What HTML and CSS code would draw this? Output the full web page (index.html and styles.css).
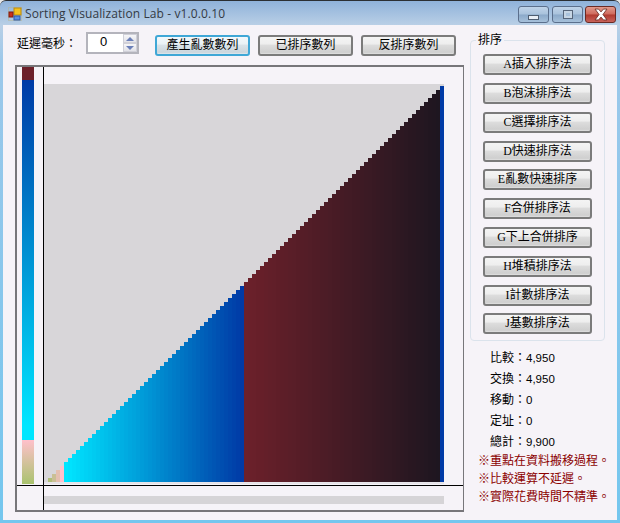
FILE: index.html
```html
<!DOCTYPE html>
<html lang="zh-Hant">
<head>
<meta charset="utf-8">
<title>Sorting Visualization Lab</title>
<link rel="stylesheet" href="styles.css">
</head>
<body>
<div class="window">
  <header class="titlebar">
    <svg class="app-icon" width="14" height="14" viewBox="0 0 14 14">
      <rect x="0.5" y="0.5" width="13" height="13" fill="none" stroke="#b9b48c" stroke-dasharray="1 1"/>
      <rect x="6" y="1" width="7" height="7" fill="#f4c21c" stroke="#b98a10"/>
      <rect x="1" y="5" width="4" height="5" fill="#c8301c" stroke="#7c1c10"/>
      <rect x="6" y="9" width="6" height="4" fill="#5a8fe0" stroke="#2c5aa8"/>
    </svg>
    <span class="title">Sorting Visualization Lab - v1.0.0.10</span>
    <div class="caption-buttons">
      <div class="cap cap-min"><span class="min-glyph"></span></div>
      <div class="cap cap-max"><span class="max-glyph"></span></div>
      <div class="cap cap-close">
        <svg width="18" height="13" viewBox="0 0 16 12">
          <path d="M2.500 1h3.200L8 3.600 10.300 1h3.200L9.800 6l3.700 5h-3.200L8 8.400 5.700 11H2.500l3.700-5z" fill="#fff" stroke="#5a2018" stroke-width="0.7"/>
        </svg>
      </div>
    </div>
  </header>
  <main class="client">
    <section class="left">
      <div class="toolbar">
        <label class="delay-label">延遲毫秒：</label>
        <div class="spin">
          <span class="spin-value">0</span>
          <div class="spin-btns">
            <div class="spin-btn"><span class="arrow-up"></span></div>
            <div class="spin-btn"><span class="arrow-down"></span></div>
          </div>
        </div>
        <div class="top-btns">
          <button class="btn btn-top btn-focus">產生亂數數列</button>
          <button class="btn btn-top">已排序數列</button>
          <button class="btn btn-top">反排序數列</button>
        </div>
      </div>
      <div class="canvas">
        <div class="strip-cell"><div class="strip"></div></div>
        <div class="chart-cell"><div class="chart" id="chart"></div></div>
        <div class="corner-cell"></div>
        <div class="track-cell"><div class="track"></div></div>
      </div>
    </section>
    <aside class="right">
      <fieldset class="group">
        <legend class="group-title">排序</legend>
        <div class="sort-btns">
          <button class="btn btn-sort">A插入排序法</button>
          <button class="btn btn-sort">B泡沫排序法</button>
          <button class="btn btn-sort">C選擇排序法</button>
          <button class="btn btn-sort">D快速排序法</button>
          <button class="btn btn-sort btn-tight">E亂數快速排序</button>
          <button class="btn btn-sort">F合併排序法</button>
          <button class="btn btn-sort">G下上合併排序</button>
          <button class="btn btn-sort">H堆積排序法</button>
          <button class="btn btn-sort">I計數排序法</button>
          <button class="btn btn-sort btn-tight">J基數排序法</button>
        </div>
      </fieldset>
      <ul class="stats">
        <li>比較：<span class="num">4,950</span></li>
        <li>交換：<span class="num">4,950</span></li>
        <li>移動：<span class="num">0</span></li>
        <li>定址：<span class="num">0</span></li>
        <li>總計：<span class="num">9,900</span></li>
      </ul>
      <ul class="notes">
        <li>※重點在資料搬移過程。</li>
        <li>※比較運算不延遲。</li>
        <li>※實際花費時間不精準。</li>
      </ul>
    </aside>
  </main>
</div>
<script src="script.js"></script>
</body>
</html>
```
FILE: styles.css
```css
* { box-sizing: border-box; }
html, body { margin: 0; padding: 0; }
body {
  width: 620px;
  height: 523px;
  overflow: hidden;
  background: #e8e8e8;
  font-family: "Noto Sans CJK TC", sans-serif;
  font-size: 12px;
  color: #000;
}
.window {
  width: 620px;
  height: 523px;
  display: flex;
  flex-direction: column;
  padding: 0 3px 3px 3px;
  border-top: 1px solid #2b2f33;
  border-radius: 6px 6px 0 0;
  background: linear-gradient(180deg, #8fb2da 0, #b9cfe6 24px, #9cc8ea 60px, #74c6ee 100%);
}
.titlebar {
  height: 24px;
  flex: none;
  display: flex;
  align-items: center;
  padding-left: 5px;
}
.app-icon { flex: none; margin-top: 1px; }
.title {
  margin-left: 3px;
  font-family: "Open Sans", sans-serif;
  font-size: 12px;
  letter-spacing: 0.1px;
  color: #333a44;
  white-space: nowrap;
}
.caption-buttons {
  margin-left: auto;
  margin-right: 1px;
  margin-top: 3px;
  display: flex;
  gap: 3px;
}
.cap {
  width: 31px;
  height: 17px;
  border: 1px solid #5b6f8c;
  border-radius: 3px;
  display: flex;
  align-items: center;
  justify-content: center;
  background: linear-gradient(180deg, #bfd3e8 0, #a9c2dc 48%, #8ba9c9 52%, #a6c0da 100%);
}
.cap-close {
  border-color: #6a2a24;
  background: linear-gradient(180deg, #e09a8c 0, #cf6a5c 48%, #b03a2e 52%, #c8625a 100%);
}
.cap-max { margin-right: -1px; }
.min-glyph {
  width: 11px;
  height: 5px;
  margin-top: 5px;
  background: #e8eef5;
  border: 1px solid #4e5d70;
}
.max-glyph {
  width: 10px;
  height: 9px;
  background: #a9c2dc;
  border: 1px solid #56657a;
  box-shadow: inset 0 0 0 2px #c6d5e4;
}
.client {
  flex: 1;
  min-height: 0;
  display: flex;
  background: #f6f3f8;
  padding-left: 12px;
}
.left {
  width: 449px;
  flex: none;
  display: flex;
  flex-direction: column;
}
.toolbar {
  height: 40px;
  flex: none;
  padding-top: 7px;
  display: flex;
  align-items: flex-start;
}
.delay-label {
  width: 71px;
  padding-left: 2px;
  line-height: 22px;
}
.spin {
  width: 53px;
  height: 22px;
  border: 2px solid #b4b4bc;
  background: #fff;
  display: flex;
  justify-content: space-between;
}
.spin-value {
  width: 31px;
  text-align: center;
  font-family: "Liberation Sans", sans-serif;
  font-size: 13px;
  line-height: 15px;
}
.spin-btns {
  width: 14px;
  display: flex;
  flex-direction: column;
}
.spin-btn {
  flex: 1;
  display: flex;
  align-items: center;
  justify-content: center;
  background: linear-gradient(180deg, #f6f6f8, #e2e2e8);
  border: 1px solid #d0d0d8;
}
.arrow-up {
  width: 0; height: 0;
  border-left: 4px solid transparent;
  border-right: 4px solid transparent;
  border-bottom: 4px solid #6a7fb8;
}
.arrow-down {
  width: 0; height: 0;
  border-left: 4px solid transparent;
  border-right: 4px solid transparent;
  border-top: 4px solid #6a7fb8;
}
.top-btns {
  margin-left: 16px;
  margin-top: 3px;
  display: flex;
  gap: 8px;
}
.btn {
  margin: 0;
  padding: 0;
  height: 21px;
  border: 2px solid #7b7b7b;
  border-radius: 3px;
  background: linear-gradient(180deg, #f4f4f4 0, #eeeeee 40%, #dcdcdc 50%, #cfcfcf 90%, #e0e0e0 100%);
  font-family: "Liberation Serif", "Noto Sans CJK TC", serif;
  font-size: 12px;
  line-height: 17px;
  color: #000;
  white-space: nowrap;
}
.btn-top { width: 95px; }
.btn-focus {
  border-color: #3fa7d6;
  background: linear-gradient(180deg, #f2f8fb 0, #eaf2f6 40%, #d8e2e8 50%, #ccd6dc 90%, #dfe8ee 100%);
}
.btn-sort { width: 109px; display: block; }
.btn-tight { margin-top: -1px; }
.canvas {
  width: 449px;
  height: 447px;
  flex: none;
  border-style: solid;
  border-color: #77767a;
  border-width: 2px 1px 2px 2px;
  display: grid;
  grid-template-columns: 27px 1fr;
  grid-template-rows: 419px 24px;
}
.strip-cell {
  border-right: 1px solid #000;
  border-bottom: 1px solid #000;
  padding: 0 0 1px 5px;
}
.strip {
  width: 12px;
  height: 417px;
  background: linear-gradient(180deg,
    #6c202a 0, #6c202a 13px,
    #003aa6 13px, #00e6ff 358px, #00e6ff 373px,
    #ffc0cb 373px, #a9c36e 417px);
}
.chart-cell {
  border-bottom: 1px solid #000;
  padding-top: 17px;
}
.chart {
  width: 400px;
  height: 400px;
  display: flex;
  align-items: flex-end;
  padding-bottom: 2px;
  background: linear-gradient(180deg, #d8d6d9 0, #d8d6d9 398px, #e6e3e8 398px);
}
.bar { width: 4px; flex: none; }
.corner-cell { border-right: 1px solid #000; }
.track-cell { padding-top: 10px; }
.track { width: 400px; height: 8px; background: #d6d4d7; }
.right {
  width: 135px;
  flex: none;
  margin-left: 6px;
  padding-top: 7px;
}
.group {
  margin: 0;
  padding: 6px 12px 6px 12px;
  min-width: 0;
  border: 1px solid #dbe3ec;
  border-radius: 4px;
}
.group-title {
  padding: 0 2px 3px 2px;
  margin-left: -7px;
  line-height: 13px;
}
.sort-btns { display: flex; flex-direction: column; gap: 8px; }
.stats, .notes { list-style: none; margin: 0; padding: 0; white-space: nowrap; }
.stats { margin-top: 6px; padding-left: 20px; line-height: 20px; }
.num { font-family: "Liberation Sans", sans-serif; font-size: 11.500px; }
.notes { margin-top: -1px; margin-left: 8px; line-height: 18px; color: #8b0000; }
```
FILE: script.js
```js
// A reverse-sorted run rendered as 100 bars, each 4px wide, height = 4 * value.
function mix(a, b, t) {
  return "rgb(" + a.map(function (v, k) { return Math.round(v + (b[k] - v) * t); }).join(",") + ")";
}
function colour(i) {
  if (i < 5) return mix([176, 190, 120], [255, 192, 203], (i - 1) / 3);
  if (i < 50) return mix([0, 230, 255], [0, 58, 166], (i - 5) / 44);
  if (i < 99) return mix([108, 32, 42], [30, 22, 32], (i - 50) / 48);
  return "rgb(0,58,166)";
}
var chart = document.getElementById("chart");
for (var i = 0; i < 100; i++) {
  var bar = document.createElement("div");
  bar.className = "bar";
  bar.style.height = 4 * i + "px";
  bar.style.background = colour(i);
  chart.appendChild(bar);
}
```
